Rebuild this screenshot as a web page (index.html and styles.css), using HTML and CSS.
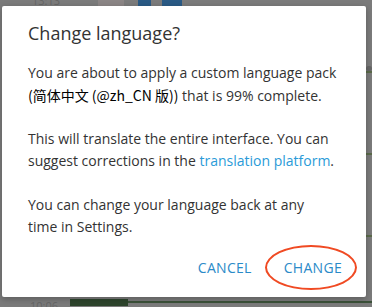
FILE: index.html
```html
<!DOCTYPE html>
<html lang="en">

<head>
    <meta charset="UTF-8">
    <title>Change language</title>
    <link rel="stylesheet" href="styles.css">
</head>

<body>
    <div class="chat">
        <div class="msg-top">
            <span class="time">13:13</span>
            <span class="thumb"></span>
            <span class="tile"></span>
            <span class="tile wide"></span>
        </div>
        <div class="side-lines">
            <span class="dot"></span>
            <span class="line"></span>
            <span class="line"></span>
            <span class="line"></span>
        </div>
        <div class="msg-bottom">
            <span class="time">10:06</span>
            <span class="bar"></span>
            <span class="rule"></span>
        </div>
    </div>

    <div class="dialog">
        <h2 class="title">Change language?</h2>
        <p>You are about to apply a custom language pack <span class="cjk">(简体中文 (@zh_CN 版))</span> that is 99% complete.</p>
        <p>This will translate the entire interface. You can suggest corrections in the <a href="#">translation platform</a>.</p>
        <p class="last">You can change your language back at any<br>time in Settings.</p>
        <div class="actions">
            <button class="btn">CANCEL</button>
            <button class="btn marked">CHANGE</button>
        </div>
    </div>
</body>

</html>
```

FILE: styles.css
```css
body {
    margin: 0;
    width: 372px;
    height: 307px;
    overflow: hidden;
    background: #7b7b7b;
    font-family: "Open Sans", sans-serif;
}

.chat {
    height: 307px;
    display: flex;
    flex-direction: column;
    justify-content: space-between;
}

.msg-top {
    display: flex;
    align-items: flex-end;
    height: 7px;
    margin-top: -1px;
}

.msg-top .time {
    font-size: 11px;
    line-height: 11px;
    color: #666;
    margin-left: 32px;
    margin-top: -6px;
}

.thumb {
    width: 26px;
    height: 7px;
    margin-left: 38px;
    background: #8b8585;
}

.tile {
    width: 13px;
    height: 7px;
    margin-left: 14px;
    background: #2a5a85;
}

.tile.wide {
    width: 20px;
    margin-left: 11px;
}

.side-lines {
    align-self: flex-end;
    width: 6px;
    display: flex;
    flex-direction: column;
    gap: 80px;
}

.side-lines .dot {
    height: 5px;
    border-radius: 3px;
    background: #666;
    margin-bottom: -80px;
}

.side-lines .line {
    height: 2px;
    background: #5a6a4a;
}

.msg-bottom {
    display: flex;
    align-items: center;
    height: 10px;
}

.msg-bottom .time {
    font-size: 11px;
    color: #666;
    margin-left: 30px;
    line-height: 10px;
    margin-top: 8px;
}

.bar {
    width: 58px;
    height: 7px;
    margin-left: 12px;
    background: #2e452d;
}

.rule {
    flex: 1;
    height: 2px;
    background: #3c523a;
}

.dialog {
    position: absolute;
    left: 2px;
    top: 6px;
    width: 364px;
    height: 291px;
    box-sizing: border-box;
    padding: 14px 24px 0 26px;
    background: #fff;
    border-radius: 2px;
    box-shadow: 0 2px 6px rgba(0, 0, 0, 0.25);
    color: #333;
}

.title {
    margin: 0 0 16px;
    font-size: 18px;
    font-weight: 400;
    line-height: 26px;
    color: #333;
}

p {
    margin: 0 0 21px;
    font-size: 14px;
    line-height: 22px;
}

p.last {
    margin-top: 22px;
}

.cjk {
    font-family: "Noto Sans CJK SC", "Open Sans", sans-serif;
    color: #000;
}

a {
    color: #2a9bd8;
    text-decoration: none;
}

.actions {
    display: flex;
    justify-content: flex-end;
    gap: 12px;
    margin-top: -7px;
    margin-right: -10px;
}

.btn {
    position: relative;
    border: none;
    background: none;
    padding: 6px 10px;
    font-family: "Open Sans", sans-serif;
    font-size: 14px;
    color: #2a8ac8;
    letter-spacing: 0.3px;
}

.marked::after {
    content: "";
    position: absolute;
    left: -9px;
    top: -7px;
    width: 88px;
    height: 41px;
    border: 2px solid #f04a23;
    border-radius: 50%;
}
```
